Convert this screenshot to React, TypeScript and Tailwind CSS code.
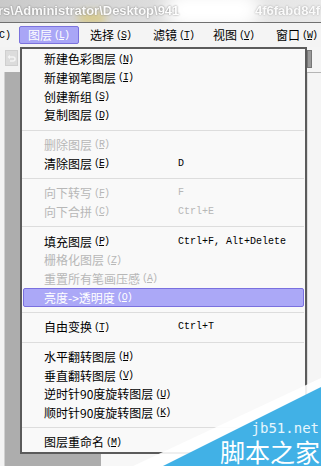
import React from "react";

type Item = { l: string; k: string; s?: string; d?: boolean; h?: boolean };

const groups: Item[][] = [
  [
    { l: "新建色彩图层", k: "N" },
    { l: "新建钢笔图层", k: "I" },
    { l: "创建新组", k: "S" },
    { l: "复制图层", k: "D" },
  ],
  [
    { l: "删除图层", k: "R", d: true },
    { l: "清除图层", k: "E", s: "D" },
  ],
  [
    { l: "向下转写", k: "F", s: "F", d: true },
    { l: "向下合拼", k: "C", s: "Ctrl+E", d: true },
  ],
  [
    { l: "填充图层", k: "P", s: "Ctrl+F, Alt+Delete" },
    { l: "栅格化图层", k: "Z", d: true },
    { l: "重置所有笔画压感", k: "A", d: true },
    { l: "亮度->透明度", k: "O", h: true },
  ],
  [{ l: "自由变换", k: "T", s: "Ctrl+T" }],
  [
    { l: "水平翻转图层", k: "H" },
    { l: "垂直翻转图层", k: "V" },
    { l: "逆时针90度旋转图层", k: "U" },
    { l: "顺时针90度旋转图层", k: "K" },
  ],
  [{ l: "图层重命名", k: "M" }],
];

const cjk = "font-['SimSun','Noto_Sans_CJK_SC',sans-serif]";
const mono = "font-['Liberation_Mono',monospace]";

function Mnemonic({ k }: { k: string }) {
  return (
    <span className={`${mono} text-[10px] tracking-[-1px] ml-[2px] whitespace-nowrap`}>
      (<span className="underline underline-offset-1">{k}</span>)
    </span>
  );
}

function MenuBarItem({ label, k, active, ml }: { label: string; k: string; active?: boolean; ml: string }) {
  return (
    <div
      className={`flex shrink-0 items-center whitespace-nowrap h-[18px] w-[60px] pl-[8px] rounded-[2px] border ${ml} ${
        active ? "bg-[#a9a6f6] border-[#7b72de] text-white" : "border-transparent text-black"
      }`}
    >
      <span className="text-[12px] leading-none">{label}</span>
      <Mnemonic k={k} />
    </div>
  );
}

function Row({ it }: { it: Item }) {
  const color = it.h ? "text-white" : it.d ? "text-[#b7b7b7]" : "text-black";
  return (
    <div
      className={`flex items-center h-[18.67px] pl-[20px] ml-px rounded-[2px] border ${
        it.h ? "bg-[#aba8f7] border-[#7a70df]" : "border-transparent"
      } ${color}`}
    >
      <div className="w-[134px] shrink-0 flex items-center whitespace-nowrap">
        <span className="text-[12px] leading-none">{it.l}</span>
        <Mnemonic k={it.k} />
      </div>
      {it.s && <span className={`${mono} text-[10px] leading-none whitespace-pre`}>{it.s}</span>}
    </div>
  );
}

function Separator() {
  return (
    <div className="h-[11px] flex items-center">
      <div className="h-px w-full bg-[#dddddd]" />
    </div>
  );
}

export default function App() {
  return (
    <div className={`relative w-[321px] h-[466px] overflow-hidden bg-[#f6f6f6] ${cjk}`}>
      {/* title bar */}
      <div className="relative h-[22px] bg-[linear-gradient(90deg,#c9c9c9,#dedede_50%,#e9e9e9)] overflow-hidden">
        <div className="absolute left-[78px] top-[12px] w-[28px] h-[12px] rounded-full bg-[#d8c56a] blur-[4px] opacity-70" />
        <div className="absolute left-[165px] top-[-8px] w-[95px] h-[36px] rounded-full bg-white blur-[8px]" />
        <div className="relative flex items-center h-full justify-between whitespace-nowrap">
          <span className="font-['Liberation_Sans',sans-serif] font-bold text-[13px] text-white [text-shadow:0_0_2px_#6a6a6a] -ml-[2px] opacity-90">
            rs\Administrator\Desktop\941
          </span>
          <span className="font-['Liberation_Sans',sans-serif] font-bold text-[13px] text-white [text-shadow:0_0_2px_#8a8a8a] mr-[1px] opacity-80">
            4f6fabd84f
          </span>
        </div>
      </div>
      <div className="h-px bg-[#707070]" />

      {/* menubar */}
      <div className="h-[24px] bg-[#f4f4f4] flex items-center whitespace-nowrap">
        <span className={`${mono} text-[10px] text-black w-[20px] shrink-0 -ml-[1px]`}>C)</span>
        <MenuBarItem label="图层" k="L" active ml="ml-0" />
        <MenuBarItem label="选择" k="S" ml="ml-[2px]" />
        <MenuBarItem label="滤镜" k="T" ml="ml-[3px]" />
        <MenuBarItem label="视图" k="V" ml="ml-0" />
        <MenuBarItem label="窗口" k="W" ml="ml-[3px]" />
      </div>

      {/* body */}
      <div className="flex h-[407px]">
        <div className="w-[20px] shrink-0 flex flex-col bg-[#f3f3f3]">
          <div className="mt-[3px] ml-[5px] w-[13px] h-[16px] bg-[#dcdcdc] border border-[#cfcfcf] flex items-center justify-center">
            <svg width="9" height="9" viewBox="0 0 9 9">
              <path d="M2 3 H6 A2 2 0 0 1 6 7 H3" fill="none" stroke="#f4f4f4" strokeWidth="1.6" />
              <path d="M0.5 3 L3 0.8 L3 5.2 Z" fill="#f4f4f4" />
            </svg>
          </div>
          <div className="mt-[6px] flex-1 ml-[4px] border-l border-[#d0d0d0] bg-[#adadad]" />
        </div>

        <div className="w-[287px] shrink-0 border-2 border-[#5b5b5b] bg-[#f9f9f9] pt-px pr-px">
          {groups.map((g, gi) => (
            <div key={gi}>
              {gi > 0 && <Separator />}
              {g.map((it) => (
                <Row key={it.l} it={it} />
              ))}
            </div>
          ))}
        </div>

        <div className="flex-1 flex flex-col bg-[#f5f5f5]">
          <div className="mt-[3px] w-[5px] h-[18px] bg-[#9a9a9a] border border-[#777]" />
          <div className="mt-[4px] h-px bg-[#b5b5b5]" />
          <div className="flex-1 border-l border-[#dcdcdc]" />
        </div>
      </div>

      {/* below menu */}
      <div className="flex h-[12px]">
        <div className="w-[5px] bg-[#f3f3f3] border-r border-[#d0d0d0]" />
        <div className="w-[96px] bg-[#adadad]" />
        <div className="flex-1 bg-[#f7f7f7]" />
      </div>

      {/* watermark */}
      <svg className="absolute left-0 top-0" width="321" height="466" viewBox="0 0 321 466">
        <polygon points="133,466 321,378 321,466" fill="#ffffff" opacity="0.9" />
        <polygon points="163,466 321,387 321,466" fill="#41b1e6" />
      </svg>
      <div className="absolute right-[2px] top-[421px] font-['DejaVu_Sans_Mono',monospace] text-[14px] leading-[14px] text-[#e6f6fd]">
        jb51.net
      </div>
      <div className="absolute right-[1px] top-[438px] text-[25px] leading-[26px] text-white">
        脚本之家
      </div>
    </div>
  );
}
